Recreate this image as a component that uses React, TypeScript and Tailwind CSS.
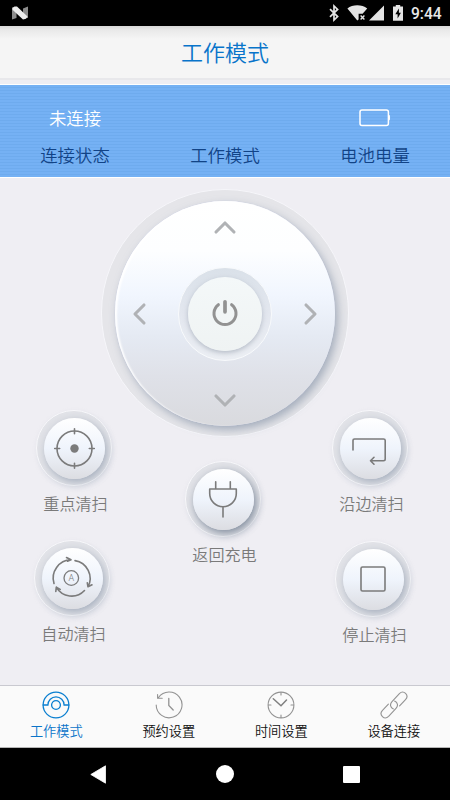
import React from 'react';

const TABS = [
  { id: 'mode', label: '工作模式' },
  { id: 'schedule', label: '预约设置' },
  { id: 'time', label: '时间设置' },
  { id: 'device', label: '设备连接' },
];

const StatusBar: React.FC = () => (
  <div className="flex h-[26px] shrink-0 items-center justify-between bg-black pl-3 pr-[9px]">
    <svg width="16" height="14" viewBox="0 0 16 14">
      <path d="M0 1.5L4.5 1V12L0 13.5zM11 2.5L16 0.5V12L11 12z" fill="#8c8c8c" />
      <path d="M0.5 2L2.5 0.6H5L15.5 10.5L14 12.7L11 13.6L0.5 3.8z" fill="#ececec" />
    </svg>
    <div className="flex items-center">
      <svg width="82" height="20" viewBox="329 3 82 20" className="shrink-0">
        <path d="M330 9.2L337.6 16.6L334 20V6L337.6 9.4L330 16.8" fill="none" stroke="#e4e4e4" strokeWidth="1.7" />
        <path d="M347.4 8.5C352.5 4.3 362 4.3 367.2 8.5L362.6 13.8H358.6V19.6L357.3 20.6z" fill="#e4e4e4" />
        <path d="M360.6 15.4L364.4 19.4M364.4 15.4L360.6 19.4" stroke="#e4e4e4" strokeWidth="1.4" />
        <path d="M384 5.5V20.6H369z" fill="#e4e4e4" />
        <path d="M393 6.5h2.8V5h4.4v1.5h2.8v14.3h-10z" fill="#e4e4e4" />
        <path d="M398.9 8.6L395.3 14.3H397.6V18.6L400.9 12.7H398.9z" fill="#000" />
      </svg>
      <span className="w-[30px] pt-[3px] text-[15.6px] leading-[23px] font-medium whitespace-nowrap text-[#e8e8e8] [font-family:Roboto,sans-serif]">
        9:44
      </span>
    </div>
  </div>
);

const Summary: React.FC = () => (
  <div className="mt-1 grid h-[94px] shrink-0 grid-cols-3 border-y border-white bg-[repeating-linear-gradient(180deg,#75b1f4_0px,#75b1f4_2px,#6eabee_2px,#6eabee_3px)] text-center text-[17.4px] leading-[26px] font-[350]">
    <div className="pt-5">
      <div className="h-[37px] text-white">未连接</div>
      <div className="text-[#114386]">连接状态</div>
    </div>
    <div className="pt-[57px] text-[#114386]">工作模式</div>
    <div className="pt-5">
      <div className="flex h-[37px] justify-center pt-1">
        <svg width="32" height="18" viewBox="0 0 32 18">
          <rect x="1" y="1" width="28.4" height="15.4" rx="2" fill="none" stroke="#fff" strokeWidth="1.5" />
          <path d="M30 6.2Q31.2 8.7 30 11.2z" fill="#fff" stroke="#fff" />
        </svg>
      </div>
      <div className="text-[#114386]">电池电量</div>
    </div>
  </div>
);

const Chevron: React.FC<{ dir: 'up' | 'down' | 'left' | 'right' }> = ({ dir }) => {
  const paths = {
    up: 'M3 12L12 3L21 12',
    down: 'M3 4L12 13L21 4',
    left: 'M12 3L3 12L12 21',
    right: 'M3 3L12 12L3 21',
  };
  const wide = dir === 'up' || dir === 'down';
  return (
    <svg width={wide ? 24 : 15} height={wide ? 15 : 24} fill="none" stroke="#b0b2b5" strokeWidth="3.1" strokeLinecap="round" strokeLinejoin="round">
      <path d={paths[dir]} />
    </svg>
  );
};

const Dial: React.FC = () => (
  <div className="mx-auto h-[248px] w-[248px] shrink-0 rounded-full border border-[#f6f6fa] bg-[#e5e5e9] pl-[13px] pt-[11px]">
    <div className="flex h-[225px] w-[220px] flex-col items-center justify-between rounded-[50%] bg-[linear-gradient(180deg,#ffffff_0%,#fdfeff_22%,#f1f6fe_42%,#e5eaf3_60%,#dfe1e8_78%,#d9dade_100%)] px-[17px] py-[19px] shadow-[3px_4px_9px_rgba(130,145,165,0.65),0_0_1px_#c9cff5,inset_2px_1px_2px_#ffffff]">
      <Chevron dir="up" />
      <div className="flex w-full items-center justify-between">
        <Chevron dir="left" />
        <div className="flex h-[94px] w-[94px] items-center justify-center rounded-full border border-[#f8fafc] bg-[linear-gradient(180deg,#dae1e9,#e3e7ef_50%,#eceff4)]">
          <div className="flex h-[74px] w-[74px] items-center justify-center rounded-full bg-[linear-gradient(180deg,#f4f8f9,#eff3f3)] shadow-[0_2px_5px_rgba(130,140,155,0.5)]">
            <svg width="30" height="30" fill="none" stroke="#929292" strokeLinecap="round">
              <path d="M8.4 5.7A11 11 0 1 0 21.6 5.7" strokeWidth="3" />
              <path d="M15 2.8V12.8" strokeWidth="3.7" />
            </svg>
          </div>
        </div>
        <Chevron dir="right" />
      </div>
      <Chevron dir="down" />
    </div>
  </div>
);

interface ModeButtonProps {
  label: string;
  deep?: boolean;
  children: React.ReactNode;
}

const ModeButton: React.FC<ModeButtonProps> = ({ label, deep, children }) => (
  <div className="flex w-[76px] flex-col items-center">
    <div className="flex h-[76px] w-[76px] items-center justify-center rounded-full border border-[#f8f8fb] bg-[#e2e3e8] shadow-[1px_2px_5px_rgba(190,195,210,0.3)]">
      <div
        className={
          deep
            ? 'flex h-[61px] w-[61px] items-center justify-center rounded-full bg-[linear-gradient(180deg,#ffffff,#eff4fc_50%,#dcdde2)] shadow-[2px_3px_8px_rgba(100,115,135,0.8)]'
            : 'flex h-[61px] w-[61px] items-center justify-center rounded-full bg-[linear-gradient(180deg,#ffffff,#eff4fc_50%,#dcdde2)] shadow-[2px_3px_8px_rgba(130,145,165,0.65)]'
        }
      >
        <svg width="44" height="44" viewBox="-22 -22 44 44" fill="none" stroke="#7b7b7b" strokeWidth="1.6" strokeLinecap="round" strokeLinejoin="round">
          {children}
        </svg>
      </div>
    </div>
    <div className="mt-1 ml-[3px] text-[16.1px] leading-[26px] font-[350] whitespace-nowrap text-[#7a7a7a]">{label}</div>
  </div>
);

const TabIcon: React.FC<{ id: string }> = ({ id }) => (
  <svg width="28" height="28" viewBox="-14 -14 28 28" fill="none" stroke={id === 'mode' ? '#0b7fd0' : '#929292'} strokeWidth="1.1" strokeLinecap="round">
    {id === 'mode' && (
      <>
        <circle r="12.9" strokeWidth="1.3" />
        <circle r="4.4" strokeWidth="1.3" />
        <path d="M-12.8 0H-8.1A8.1 8.1 0 0 1 8.1 0H12.8" strokeWidth="1.3" />
      </>
    )}
    {id === 'schedule' && (
      <>
        <path d="M-12.8 0A12.9 12.9 0 1 0 -10.5 -7.5M-11.4 -10.5V-6.8H-6.8" />
        <path d="M-0.2 -6.6V0.5L4.2 5" strokeWidth="1.3" />
      </>
    )}
    {id === 'time' && (
      <>
        <circle r="12.9" />
        <path d="M-7.7 -6.2L0 0.7L5.5 -5" strokeWidth="1.5" stroke="#7f7f7f" />
        <path d="M0 -12.5V-10M0 12.5V10M-12.5 0H-10M12.5 0H10" />
      </>
    )}
    {id === 'device' && (
      <>
        <path d="M-0.6 3.9C-4 2.4 -4.3 -1 -2 -3.4L5.4 -11.4C9.6 -15.6 15.6 -9.6 11.5 -5.4L5.6 0.9" />
        <path d="M0.6 -3.9C4 -2.4 4.3 1 2 3.4L-5.4 11.4C-9.6 15.6 -15.6 9.6 -11.5 5.4L-5.6 -0.9" />
      </>
    )}
  </svg>
);

export default function App() {
  return (
    <div className="flex h-[800px] w-[450px] flex-col overflow-hidden bg-[#efeef3] [font-family:'Noto_Sans_CJK_SC',sans-serif]">
      <StatusBar />
      <header className="h-[54px] shrink-0 border-b-2 border-[#e8e8eb] bg-[linear-gradient(180deg,#d9d9d9_0px,#e9e9e9_4px,#f5f5f5_13px)] text-center text-[22px] leading-[50px] font-[350] text-[#0874ca]">
        工作模式
      </header>
      <Summary />

      <main className="flex h-[507px] shrink-0 flex-col pt-[11px]">
        <Dial />
        <div className="-mt-[27px] flex justify-between pl-[34px] pr-[39px]">
          <div className="flex flex-col gap-6">
            <div className="ml-[2px]">
              <ModeButton label="重点清扫">
                <circle cx="0.5" cy="0.5" r="17.5" />
                <circle cx="0.5" cy="0.5" r="4.2" fill="#7b7b7b" stroke="none" />
                <path d="M0.5 -19.3V-14.3M0.5 20.3V15.3M-19.3 0.5H-14.3M20.3 0.5H15.3" />
              </ModeButton>
            </div>
            <ModeButton label="自动清扫">
              <path d="M-18 5.5A18.3 18.3 0 0 1 -1 -18.2L-5.5 -20.5M-1 -18.2L-4.5 -16.8" />
              <path d="M3 -17.4A18 18 0 0 1 16 8.8L20 6.8M16 8.8L15.3 4.8" />
              <path d="M12.5 12.5A17.6 17.6 0 0 1 -15.7 9.2L-16.2 13.5M-15.7 9.2L-11.8 11.4" />
              <circle cx="-0.7" r="7.3" strokeWidth="1.3" />
              <text x="-0.7" y="3.2" textAnchor="middle" fontSize="9" fontWeight="300" fontFamily="Roboto, sans-serif" fill="#7b7b7b" stroke="none">
                A
              </text>
            </ModeButton>
          </div>
          <div className="mt-[51px] -ml-px">
            <ModeButton label="返回充电" deep>
              <path d="M-13.3 -10H13.3V-5.5A13.3 13.3 0 0 1 -13.3 -5.5zM-7.3 -17.2V-10.5M7.3 -17.2V-10.5M0 8.5V18" />
            </ModeButton>
          </div>
          <div className="flex flex-col gap-[25px]">
            <div className="-ml-[3px]">
              <ModeButton label="沿边清扫">
                <path d="M-17 2V-7.8Q-17 -9 -15.5 -9H13.5Q15.2 -9 15.2 -7.5V11Q15.2 12.7 13.5 12.7H1M4 9.3L0.5 12.7L4 16.2" />
              </ModeButton>
            </div>
            <ModeButton label="停止清扫">
              <rect x="-12" y="-12" width="24" height="24" rx="1.5" />
            </ModeButton>
          </div>
        </div>
      </main>

      <nav className="grid h-[63px] shrink-0 grid-cols-4 border-t border-b border-t-[#c9c9d0] border-b-[#b5b5b5] bg-[#fafafa]">
        {TABS.map((tab) => (
          <div key={tab.id} className="flex flex-col items-center pt-[5px]">
            <TabIcon id={tab.id} />
            <span className={tab.id === 'mode' ? 'text-[13.2px] leading-6 font-[350] text-[#0b74c9]' : 'text-[13.2px] leading-6 font-[350] text-[#111111]'}>
              {tab.label}
            </span>
          </div>
        ))}
      </nav>

      <div className="flex h-[52px] shrink-0 items-center justify-between bg-black pl-[90px] pr-[90px]">
        <svg width="16" height="19">
          <path d="M0.8 9.5L15.5 0.8V18.2z" fill="#fff" stroke="#fff" strokeWidth="0.8" strokeLinejoin="round" />
        </svg>
        <div className="h-[18px] w-[18px] rounded-full bg-white" />
        <div className="h-[17px] w-[17px] rounded-[1px] bg-white" />
      </div>
    </div>
  );
}
